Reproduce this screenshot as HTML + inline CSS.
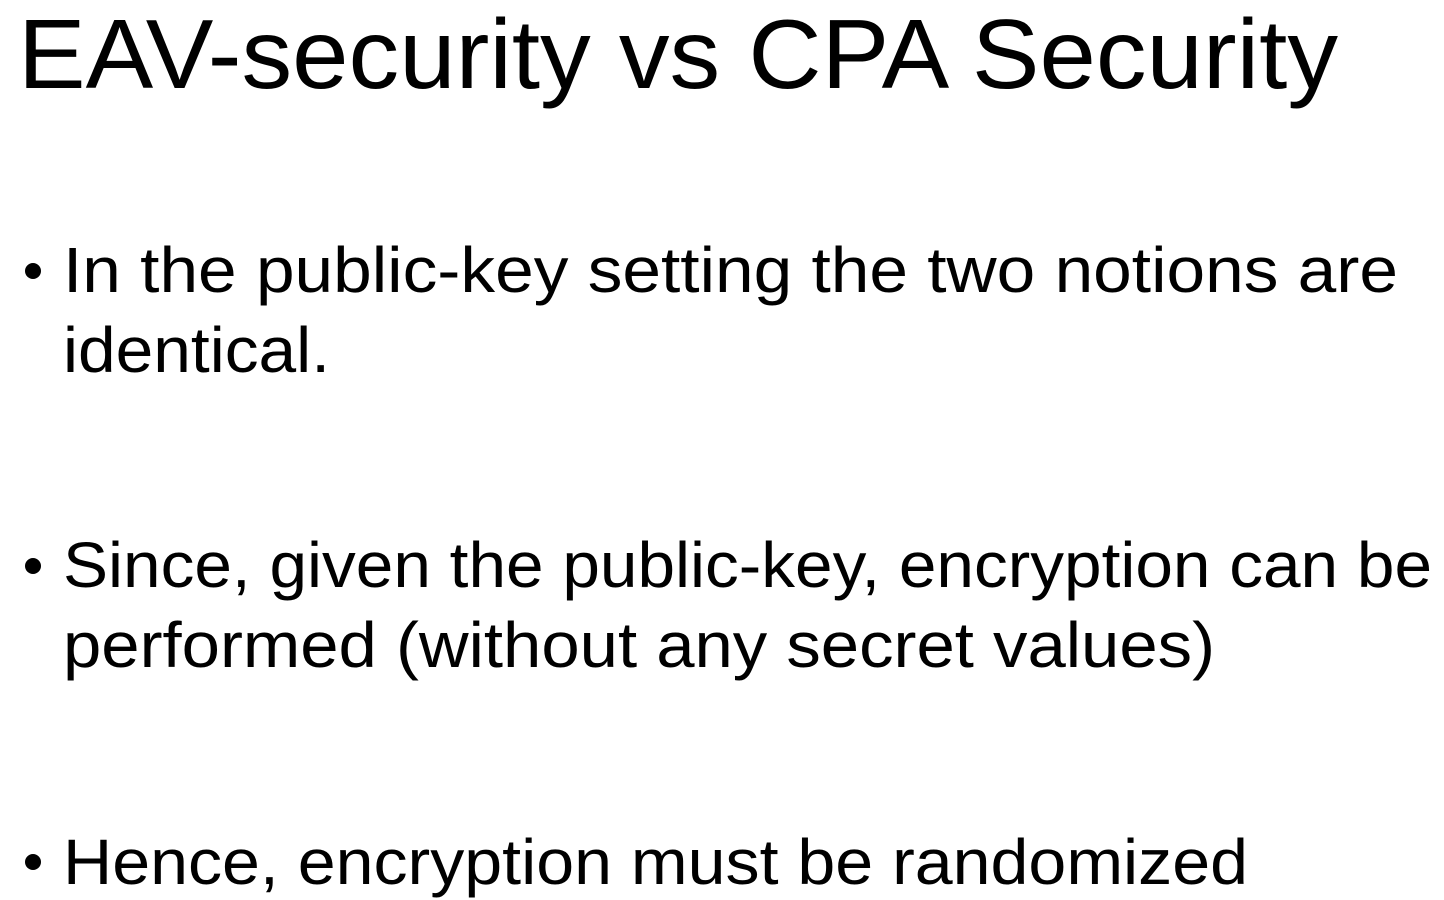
<!DOCTYPE html>
<html><head><meta charset="utf-8"><style>
html,body{margin:0;padding:0;background:#fff;width:1444px;height:900px;overflow:hidden}
svg{display:block}
text{font-family:"Liberation Sans",sans-serif;fill:#000}
</style></head><body>
<svg width="1444" height="900" viewBox="0 0 1444 900">
<text x="18" y="88" font-size="98" textLength="1320" lengthAdjust="spacingAndGlyphs">EAV-security vs CPA Security</text>
<circle cx="33" cy="271" r="8"/>
<text x="63" y="292" font-size="64" textLength="1335" lengthAdjust="spacingAndGlyphs">In the public-key setting the two notions are</text>
<text x="63" y="372" font-size="64" textLength="267" lengthAdjust="spacingAndGlyphs">identical.</text>
<circle cx="33" cy="566" r="8"/>
<text x="63" y="587" font-size="64" textLength="1369" lengthAdjust="spacingAndGlyphs">Since, given the public-key, encryption can be</text>
<text x="63" y="667" font-size="64" textLength="1152" lengthAdjust="spacingAndGlyphs">performed (without any secret values)</text>
<circle cx="33" cy="862" r="8"/>
<text x="63" y="884" font-size="64" textLength="1185" lengthAdjust="spacingAndGlyphs">Hence, encryption must be randomized</text>
</svg>
</body></html>
